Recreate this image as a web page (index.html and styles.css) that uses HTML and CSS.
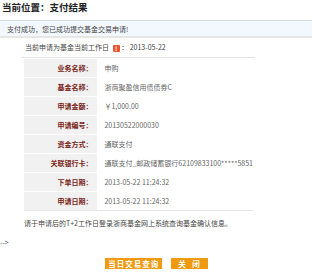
FILE: index.html
```html
<!DOCTYPE html>
<html lang="zh-CN">
<head>
    <meta charset="UTF-8">
    <title>支付结果</title>
    <link rel="stylesheet" href="styles.css">
</head>
<body>
    <div class="location">当前位置：支付结果</div>

    <div class="notice">支付成功，您已成功提交基金交易申请!</div>

    <div class="apply-head">
        当前申请为基金当前工作日
        <span class="tip-icon">!</span>
        ：&nbsp;2013-05-22
    </div>

    <table class="result-table">
        <tr><th>业务名称：</th><td>申购</td></tr>
        <tr><th>基金名称：</th><td>浙商聚盈信用债债券C</td></tr>
        <tr><th>申请金额：</th><td>￥1,000.00</td></tr>
        <tr><th>申请编号：</th><td>20130522000030</td></tr>
        <tr><th>资金方式：</th><td>通联支付</td></tr>
        <tr><th>关联银行卡：</th><td>通联支付_邮政储蓄银行62109833100*****5851</td></tr>
        <tr><th>下单日期：</th><td>2013-05-22 11:24:32</td></tr>
        <tr><th>申请日期：</th><td>2013-05-22 11:24:32</td></tr>
    </table>

    <div class="remark">请于申请后的T+2工作日登录浙商基金网上系统查询基金确认信息。</div>

    <div class="stray">--&gt;</div>

    <div class="buttons">
        <button class="btn">当日交易查询</button>
        <button class="btn btn-close">关&nbsp;&nbsp;闭</button>
    </div>
</body>
</html>
```

FILE: styles.css
```css
* {
    margin: 0;
    padding: 0;
    box-sizing: border-box;
}
body {
    background-color: white;
    font-family: "Noto Sans CJK SC", "Liberation Sans", sans-serif;
    font-size: 7px;
    color: #555;
}
.location {
    height: 20px;
    line-height: 15px;
    padding-left: 2px;
    font-size: 9.5px;
    font-weight: bold;
    color: #222;
}
.notice {
    width: 312px;
    height: 18px;
    line-height: 16px;
    padding-left: 7px;
    background-color: #f3f7fe;
    border-top: 1px solid #dcdcdc;
    border-bottom: 2px solid #e6e6e6;
    color: #444;
}
.apply-head {
    width: 233px;
    height: 20px;
    margin-left: 22px;
    padding-left: 3px;
    line-height: 19px;
    border-bottom: 1px solid #e4e4e4;
    color: #444;
}
.tip-icon {
    display: inline-block;
    width: 7px;
    height: 7px;
    line-height: 7px;
    border-radius: 1px;
    background-color: #e8542c;
    color: white;
    font-size: 6px;
    font-weight: bold;
    text-align: center;
    vertical-align: -1px;
    margin-left: 2px;
}
.result-table {
    width: 229px;
    margin-left: 24px;
    border-collapse: collapse;
    border-bottom: 1px solid #e6e6e6;
}
.result-table th,
.result-table td {
    height: 19px;
    border-top: 1px solid white;
    white-space: nowrap;
}
.result-table th {
    width: 94px;
    padding-right: 5px;
    text-align: right;
    background-color: #f1f1f1;
    color: #7a2418;
    font-weight: bold;
}
.result-table td {
    padding-left: 7px;
    text-align: left;
    color: #666;
}
.remark {
    margin-top: 5px;
    padding-left: 24px;
    line-height: 15px;
    color: #444;
}
.stray {
    margin-top: 4px;
    line-height: 15px;
    color: #555;
}
.buttons {
    display: flex;
    justify-content: center;
    gap: 9px;
    margin-top: 8px;
}
.btn {
    height: 11px;
    padding: 0 3px;
    border: none;
    background-color: #f09a12;
    color: white;
    font-family: "Noto Sans CJK SC", sans-serif;
    font-size: 7.5px;
    font-weight: bold;
    letter-spacing: 1px;
    line-height: 11px;
}
.btn-close {
    padding: 0 7px;
}
```
